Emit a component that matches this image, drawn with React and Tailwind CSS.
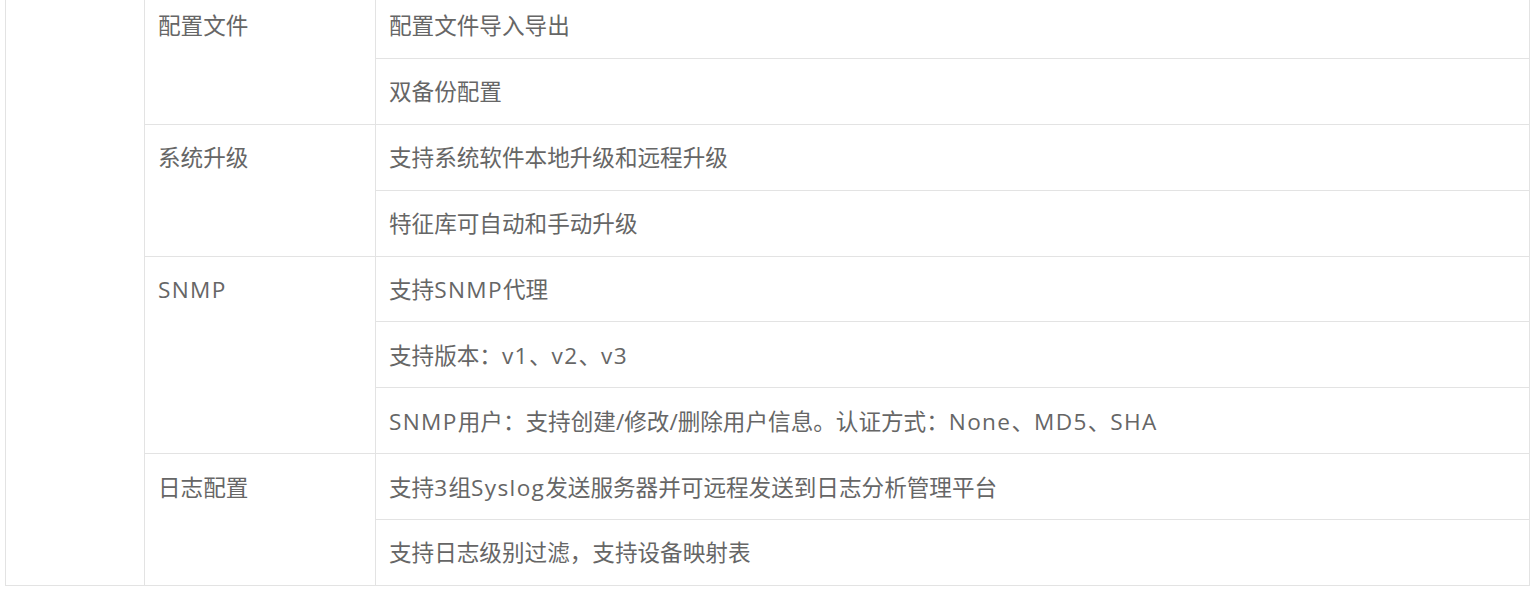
const groups = [
  { name: '配置文件', items: ['配置文件导入导出', '双备份配置'] },
  { name: '系统升级', items: ['支持系统软件本地升级和远程升级', '特征库可自动和手动升级'] },
  {
    name: 'SNMP',
    items: ['支持SNMP代理', '支持版本：v1、v2、v3', 'SNMP用户：支持创建/修改/删除用户信息。认证方式：None、MD5、SHA'],
  },
  { name: '日志配置', items: ['支持3组Syslog发送服务器并可远程发送到日志分析管理平台', '支持日志级别过滤，支持设备映射表'] },
];

// latin runs sit a little wider in the original font
function Text({ value }) {
  return value.split(/([A-Za-z0-9]+)/).map((part, i) =>
    /^[A-Za-z0-9]+$/.test(part) ? (
      <span key={i} className="tracking-[0.06em]">
        {part}
      </span>
    ) : (
      part
    ),
  );
}

function Cell({ children }) {
  return (
    <div className="flex h-[64.875px] items-center px-[13px] pt-[2px]">
      <Text value={children} />
    </div>
  );
}

export default function App() {
  return (
    <div
      className="min-h-[602px] bg-white text-[22.6px] text-[#666666]"
      style={{ fontFamily: '"Open Sans", "Noto Sans CJK SC", sans-serif' }}
    >
      <div className="ml-[5px] mt-[-8px] flex w-[1525px] border border-[#e3e3e3]">
        <div className="w-[139px] shrink-0 border-r border-[#e3e3e3]" />
        <div className="flex flex-1 flex-col">
          {groups.map((g, gi) => (
            <div key={g.name} className={`flex ${gi < groups.length - 1 ? 'border-b border-[#e3e3e3]' : ''}`}>
              <div className="w-[231px] shrink-0 border-r border-[#e3e3e3]">
                <Cell>{g.name}</Cell>
              </div>
              <div className="flex flex-1 flex-col">
                {g.items.map((item, i) => (
                  <div key={item} className={i < g.items.length - 1 ? 'border-b border-[#e3e3e3]' : ''}>
                    <Cell>{item}</Cell>
                  </div>
                ))}
              </div>
            </div>
          ))}
        </div>
      </div>
    </div>
  );
}
